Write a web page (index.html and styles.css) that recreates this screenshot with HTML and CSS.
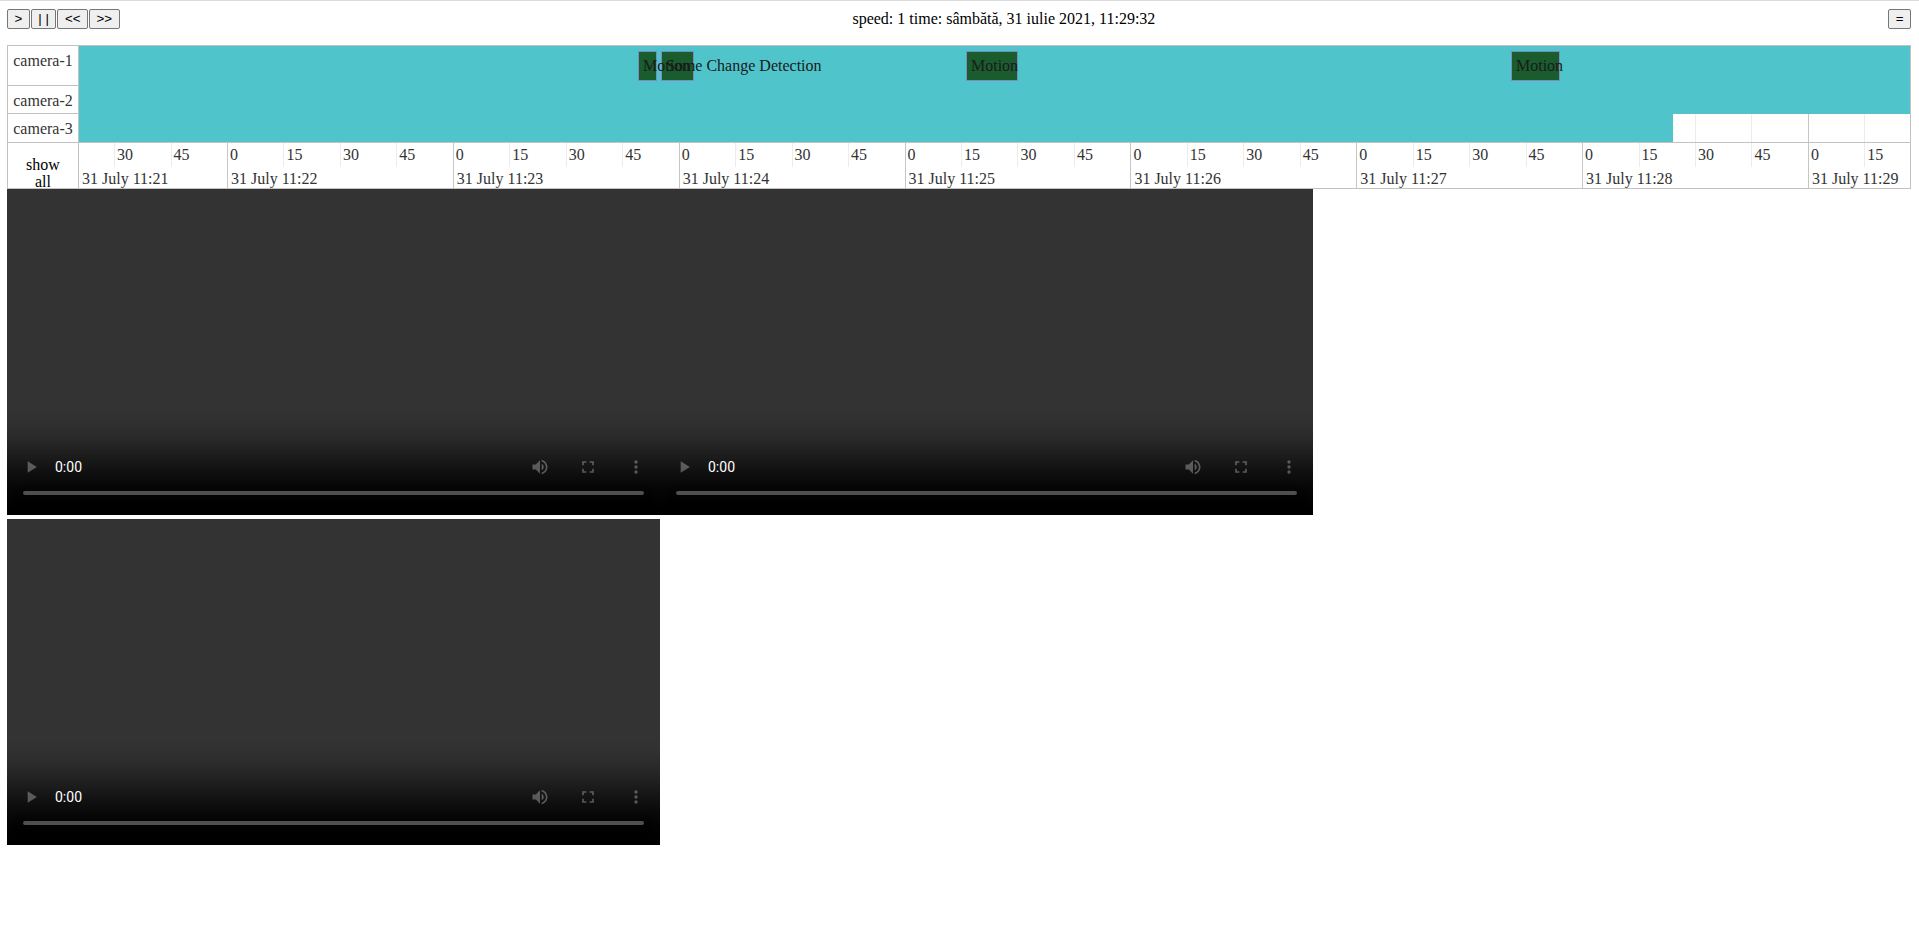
FILE: index.html
```html
<!DOCTYPE html>
<html lang="ro">
<head>
<meta charset="utf-8">
<title>Playback</title>
<link rel="stylesheet" href="styles.css">
</head>
<body>
<header class="topbar">
  <div class="controls"><button class="btn">&gt;</button><button class="btn">| |</button><button class="btn">&lt;&lt;</button><button class="btn">&gt;&gt;</button></div>
  <div class="status">speed: 1 time: sâmbătă, 31 iulie 2021, 11:29:32</div>
  <button class="btn">=</button>
</header>

<section class="timeline">
  <div class="label row-1">camera-1</div>
  <div class="label row-2">camera-2</div>
  <div class="label row-3">camera-3</div>
  <div class="label show-all"><span>show all</span></div>

  <div class="track">
    <div class="lane lane-tall">
      <div class="rec" style="left:0;width:1831px"></div>
      <div class="event" style="left:559px;width:19px"><span>Motion</span></div>
      <div class="event" style="left:582px;width:33px"><span>Some Change Detection</span></div>
      <div class="event" style="left:887px;width:52px"><span>Motion</span></div>
      <div class="event" style="left:1432px;width:49px"><span>Motion</span></div>
    </div>
    <div class="lane">
      <div class="rec" style="left:0;width:1831px"></div>
    </div>
    <div class="lane">
      <div class="rec" style="left:0;width:1594px"></div>
    </div>
  </div>

  <div class="axis">
    <div class="minute first" style="width:148px">
      <div class="ticks"><div class="tick spacer" style="width:35.07px"></div><div class="tick">30</div><div class="tick">45</div></div>
      <div class="date">31 July 11:21</div>
    </div>
    <div class="minute">
      <div class="ticks"><div class="tick zero">0</div><div class="tick">15</div><div class="tick">30</div><div class="tick">45</div></div>
      <div class="date">31 July 11:22</div>
    </div>
    <div class="minute">
      <div class="ticks"><div class="tick zero">0</div><div class="tick">15</div><div class="tick">30</div><div class="tick">45</div></div>
      <div class="date">31 July 11:23</div>
    </div>
    <div class="minute">
      <div class="ticks"><div class="tick zero">0</div><div class="tick">15</div><div class="tick">30</div><div class="tick">45</div></div>
      <div class="date">31 July 11:24</div>
    </div>
    <div class="minute">
      <div class="ticks"><div class="tick zero">0</div><div class="tick">15</div><div class="tick">30</div><div class="tick">45</div></div>
      <div class="date">31 July 11:25</div>
    </div>
    <div class="minute">
      <div class="ticks"><div class="tick zero">0</div><div class="tick">15</div><div class="tick">30</div><div class="tick">45</div></div>
      <div class="date">31 July 11:26</div>
    </div>
    <div class="minute">
      <div class="ticks"><div class="tick zero">0</div><div class="tick">15</div><div class="tick">30</div><div class="tick">45</div></div>
      <div class="date">31 July 11:27</div>
    </div>
    <div class="minute">
      <div class="ticks"><div class="tick zero">0</div><div class="tick">15</div><div class="tick">30</div><div class="tick">45</div></div>
      <div class="date">31 July 11:28</div>
    </div>
    <div class="minute last">
      <div class="ticks"><div class="tick zero">0</div><div class="tick">15</div></div>
      <div class="date">31 July 11:29</div>
    </div>
  </div>
</section>

<div class="videos"><video class="cam-video" controls></video><video class="cam-video" controls></video><video class="cam-video" controls></video></div>
</body>
</html>
```

FILE: styles.css
```css
html {
  border-top: 1px solid #dcdcdc;
}

body {
  margin: 0;
  padding: 8px 8px 0 7px;
  font-family: "Liberation Serif", "Times New Roman", serif;
  font-size: 16px;
  color: #000;
  background: #fff;
}

.topbar {
  display: flex;
  align-items: flex-start;
  margin-bottom: 16px;
}

.controls {
  display: flex;
  gap: 1px;
}

.btn {
  box-sizing: border-box;
  height: 20px;
  padding: 0 6.5px;
  border: 1px solid #767676;
  border-radius: 2px;
  background: #efefef;
  color: #000;
  font-family: "Liberation Sans", Arial, sans-serif;
  font-size: 13.333px;
  line-height: 18px;
}

.status {
  flex: 1;
  text-align: center;
  line-height: 18px;
  padding-top: 1px;
}

/* timeline table */
.timeline {
  display: grid;
  grid-template-columns: 71px 1fr;
  grid-template-rows: 40px 28px 28px 46px;
  border: 1px solid #c2c2c2;
}

.label {
  box-sizing: border-box;
  grid-column: 1;
  border-right: 1px solid #c2c2c2;
  padding-top: 6px;
  line-height: 18px;
  text-align: center;
  color: #333;
}

.row-1 { grid-row: 1; border-bottom: 1px solid #c2c2c2; }
.row-2 { grid-row: 2; border-bottom: 1px solid #c2c2c2; }
.row-3 { grid-row: 3; }

.show-all {
  grid-row: 4;
  border-top: 1px solid #c2c2c2;
  padding-top: 13px;
  line-height: 17px;
  color: #000;
}

.show-all span {
  display: inline-block;
  width: min-content;
}

.track {
  grid-column: 2;
  grid-row: 1 / 4;
  position: relative;
  background-image:
    repeating-linear-gradient(to right, #c6c6c6 0 1px, transparent 1px 225.857px),
    repeating-linear-gradient(to right, #ececec 0 1px, transparent 1px 56.464px);
  background-size: 100% 100%, 100% 100%;
  background-position: 148px 0, 35.07px 0;
  background-repeat: no-repeat;
}

.lane {
  position: relative;
  height: 28px;
}

.lane-tall {
  height: 40px;
}

.rec {
  position: absolute;
  top: 0;
  bottom: 0;
  background: #4fc4ca;
}

.event {
  position: absolute;
  top: 5px;
  box-sizing: border-box;
  height: 30px;
  padding: 4px;
  border: 1px solid #7a8cc4;
  background: #1a5c2e;
  color: #1a1a1a;
  line-height: 20px;
  white-space: nowrap;
}

.event span {
  position: relative;
  z-index: 1;
}

/* axis */
.axis {
  grid-column: 2;
  grid-row: 4;
  border-top: 1px solid #c2c2c2;
  display: flex;
  overflow: hidden;
  color: #333;
}

.minute {
  box-sizing: border-box;
  flex: none;
  width: 225.857px;
  border-left: 1px solid #c6c6c6;
  display: flex;
  flex-direction: column;
}

.minute.first {
  border-left: 0;
}

.minute.last {
  flex: 1;
  min-width: 0;
}

.ticks {
  display: flex;
  height: 24px;
}

.tick {
  box-sizing: border-box;
  flex: none;
  width: 56.464px;
  height: 24px;
  border-left: 1px solid #ececec;
  padding: 3px 0 0 2px;
  line-height: 18px;
}

.tick.zero {
  width: 55.464px;
  border-left: 0;
}

.tick.spacer {
  border-left: 0;
}

.date {
  padding: 3px 0 0 3px;
  line-height: 18px;
  white-space: nowrap;
}

/* videos */
.cam-video {
  width: 653px;
  height: 326px;
}
```
